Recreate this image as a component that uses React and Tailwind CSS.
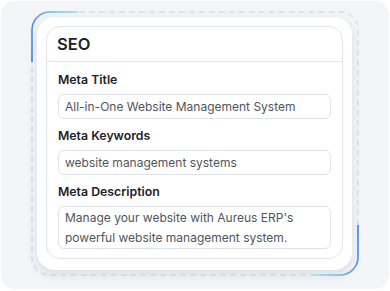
export default function App() {
  return (
    <div className="w-[390px] h-[291px] bg-white pt-[1px] px-[1px] pb-[2px]" style={{ fontFamily: "Inter, 'Noto Sans', sans-serif" }}>
      <div className="h-full rounded-[14px] bg-[#f3f5f9] pl-[30px] pr-[30px] pt-[10px] pb-[13px]">
        <div className="relative h-full rounded-[18px] border-2 border-dashed border-[#e1e4ea] pl-[4px] pt-[4px] pr-[5px] pb-[4px]">
          <svg className="absolute -inset-[2px] pointer-events-none" width="328" height="265" viewBox="0 0 328 265" fill="none">
            <defs>
              <linearGradient id="g1" gradientUnits="userSpaceOnUse" x1="1" y1="51" x2="47" y2="1">
                <stop offset="0" stopColor="#3f7fe0" />
                <stop offset="0.55" stopColor="#5a9be6" />
                <stop offset="1" stopColor="#9fe0e3" />
              </linearGradient>
              <linearGradient id="g2" gradientUnits="userSpaceOnUse" x1="327" y1="214" x2="281" y2="264">
                <stop offset="0" stopColor="#3f7fe0" />
                <stop offset="0.55" stopColor="#5a9be6" />
                <stop offset="1" stopColor="#a6e3e3" />
              </linearGradient>
            </defs>
            <path d="M1 51 L1 19 A18 18 0 0 1 19 1 L47 1" stroke="url(#g1)" strokeWidth="1.6" />
            <path d="M327 214 L327 246 A18 18 0 0 1 309 264 L281 264" stroke="url(#g2)" strokeWidth="1.6" />
          </svg>
          <div className="h-full rounded-[18px] bg-white shadow-[0_4px_12px_rgba(30,40,60,0.12)] pt-[9px] pl-[9px] pr-[9px] pb-[11px]">
            <div className="h-full rounded-[14px] border border-[#e3e5ea] flex flex-col">
              <div className="h-[35px] shrink-0 border-b border-[#e3e5ea] px-[10px] flex items-center">
                <span className="text-[16.5px] font-semibold text-[#1f2329] leading-none">SEO</span>
              </div>
              <div className="px-[11px] pt-[9px] flex flex-col">
                <div className="text-[12.3px] leading-[18px] font-semibold text-[#1f2329]">Meta Title</div>
                <div className="mt-[5px] h-[25px] rounded-[6px] border border-[#dfe2e7] px-[6px] flex items-center text-[12px] text-[#50555d]">
                  All-in-One Website Management System
                </div>
                <div className="mt-[8px] text-[12.3px] leading-[18px] font-semibold text-[#1f2329]">Meta Keywords</div>
                <div className="mt-[5px] h-[25px] rounded-[6px] border border-[#dfe2e7] px-[6px] flex items-center text-[12px] text-[#50555d]">
                  website management systems
                </div>
                <div className="mt-[8px] text-[12.3px] leading-[18px] font-semibold text-[#1f2329]">Meta Description</div>
                <div className="mt-[5px] h-[43px] rounded-[6px] border border-[#dfe2e7] px-[6px] pt-[1px] text-[12px] leading-[20px] text-[#50555d]">
                  Manage your website with Aureus ERP's
                  <br />
                  powerful website management system.
                </div>
              </div>
            </div>
          </div>
        </div>
      </div>
    </div>
  );
}
